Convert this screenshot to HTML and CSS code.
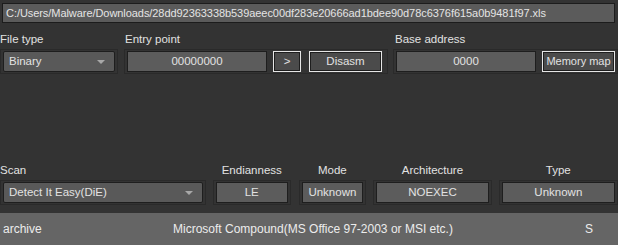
FILE: index.html
```html
<!DOCTYPE html>
<html>
<head>
<meta charset="utf-8">
<link rel="stylesheet" href="styles.css">
</head>
<body>
<div class="app">
  <div class="path">C:/Users/Malware/Downloads/28dd92363338b539aeec00df283e20666ad1bdee90d78c6376f615a0b9481f97.xls</div>

  <div class="top-row">
    <div class="group g-filetype">
      <div class="label">File type</div>
      <div class="frame">
        <div class="combo">Binary<span class="arrow"></span></div>
      </div>
    </div>
    <div class="group g-entry">
      <div class="label">Entry point</div>
      <div class="frame">
        <div class="field f-entry">00000000</div>
        <div class="btn b-go">&gt;</div>
        <div class="btn b-disasm">Disasm</div>
      </div>
    </div>
    <div class="group g-base">
      <div class="label">Base address</div>
      <div class="frame">
        <div class="field f-base">0000</div>
        <div class="btn b-mem">Memory map</div>
      </div>
    </div>
  </div>

  <div class="spacer"></div>

  <div class="bottom-row">
    <div class="group g-scan">
      <div class="label">Scan</div>
      <div class="frame">
        <div class="combo c-scan">Detect It Easy(DiE)<span class="arrow"></span></div>
      </div>
    </div>
    <div class="group g-endian">
      <div class="label center">Endianness</div>
      <div class="frame"><div class="field">LE</div></div>
    </div>
    <div class="group g-mode">
      <div class="label center">Mode</div>
      <div class="frame"><div class="field">Unknown</div></div>
    </div>
    <div class="group g-arch">
      <div class="label center">Architecture</div>
      <div class="frame"><div class="field">NOEXEC</div></div>
    </div>
    <div class="group g-type">
      <div class="label center">Type</div>
      <div class="frame"><div class="field">Unknown</div></div>
    </div>
  </div>

  <div class="status">
    <span class="s-type">archive</span>
    <span class="s-name">Microsoft Compound(MS Office 97-2003 or MSI etc.)</span>
    <span class="s-flag">S</span>
  </div>
</div>
</body>
</html>
```

FILE: styles.css
```css
html, body {
  margin: 0;
  padding: 0;
  background: #333333;
}
.app {
  width: 618px;
  height: 245px;
  display: flex;
  flex-direction: column;
  font-family: "Liberation Sans", Arial, sans-serif;
  font-size: 11px;
  color: #e2e2e2;
  overflow: hidden;
}
.path {
  margin: 3px 3px 0 2px;
  height: 20px;
  line-height: 18px;
  box-sizing: border-box;
  padding-left: 3px;
  background: #5b5b5b;
  border: 1px solid #1c1c1c;
  color: #e4e4e4;
  white-space: nowrap;
  overflow: hidden;
  letter-spacing: -0.06px;
}
.top-row {
  display: flex;
  margin-top: 9px;
}
.bottom-row {
  display: flex;
}
.spacer {
  flex: 1;
}
.group {
  display: flex;
  flex-direction: column;
}
.label {
  height: 14px;
  line-height: 14px;
  margin-bottom: 3px;
  white-space: nowrap;
  font-size: 11.5px;
}
.label.center {
  text-align: center;
}
.frame {
  display: flex;
  align-items: center;
  gap: 6px;
  border: 1px solid #2a2a2a;
  padding: 2px;
  height: 25px;
  box-sizing: border-box;
}
.field {
  flex: 1;
  height: 21px;
  box-sizing: border-box;
  background: #5c5c5c;
  border: 1px solid #1e1e1e;
  text-align: center;
  line-height: 19px;
  color: #e2e2e2;
  white-space: nowrap;
  font-size: 11.5px;
}
.combo {
  position: relative;
  flex: 1;
  height: 21px;
  box-sizing: border-box;
  background: #595959;
  border: 1px solid #1e1e1e;
  border-radius: 2px;
  padding-left: 5px;
  line-height: 19px;
  color: #e2e2e2;
  font-size: 11.5px;
}
.arrow {
  position: absolute;
  right: 9px;
  top: 8px;
  width: 0;
  height: 0;
  border-left: 4px solid transparent;
  border-right: 4px solid transparent;
  border-top: 4px solid #a8a8a8;
}
.btn {
  height: 21px;
  box-sizing: border-box;
  background: #4b4b4b;
  border: 1px solid #e6e6e6;
  box-shadow: inset 0 0 0 1px #1e1e1e;
  text-align: center;
  line-height: 19px;
  color: #e2e2e2;
  white-space: nowrap;
  font-size: 11.5px;
}

.g-filetype { width: 118px; }
.g-entry { width: 264px; margin-left: 6px; }
.g-entry .label { padding-left: 1px; }
.g-base { width: 225px; margin-left: 5px; }
.g-base .label { padding-left: 2px; }
.f-entry { flex: 0 0 140px; }
.b-go { width: 28px; }
.b-disasm { width: 73px; margin-left: 2px; }
.f-base { flex: 0 0 140px; }
.b-mem { width: 73px; font-size: 11px; }

.g-scan { width: 207px; }
.g-endian { width: 78px; margin-left: 7px; }
.g-mode { width: 68px; margin-left: 8px; }
.g-arch { width: 119px; margin-left: 7px; }
.g-type { width: 120px; margin-left: 7px; }

.status {
  margin-top: 8px;
  height: 32px;
  background: #656565;
  display: flex;
  align-items: center;
  color: #ececec;
  font-size: 12px;
  white-space: nowrap;
}
.s-type { width: 170px; padding-left: 3px; }
.s-name { width: 412px; }
```
